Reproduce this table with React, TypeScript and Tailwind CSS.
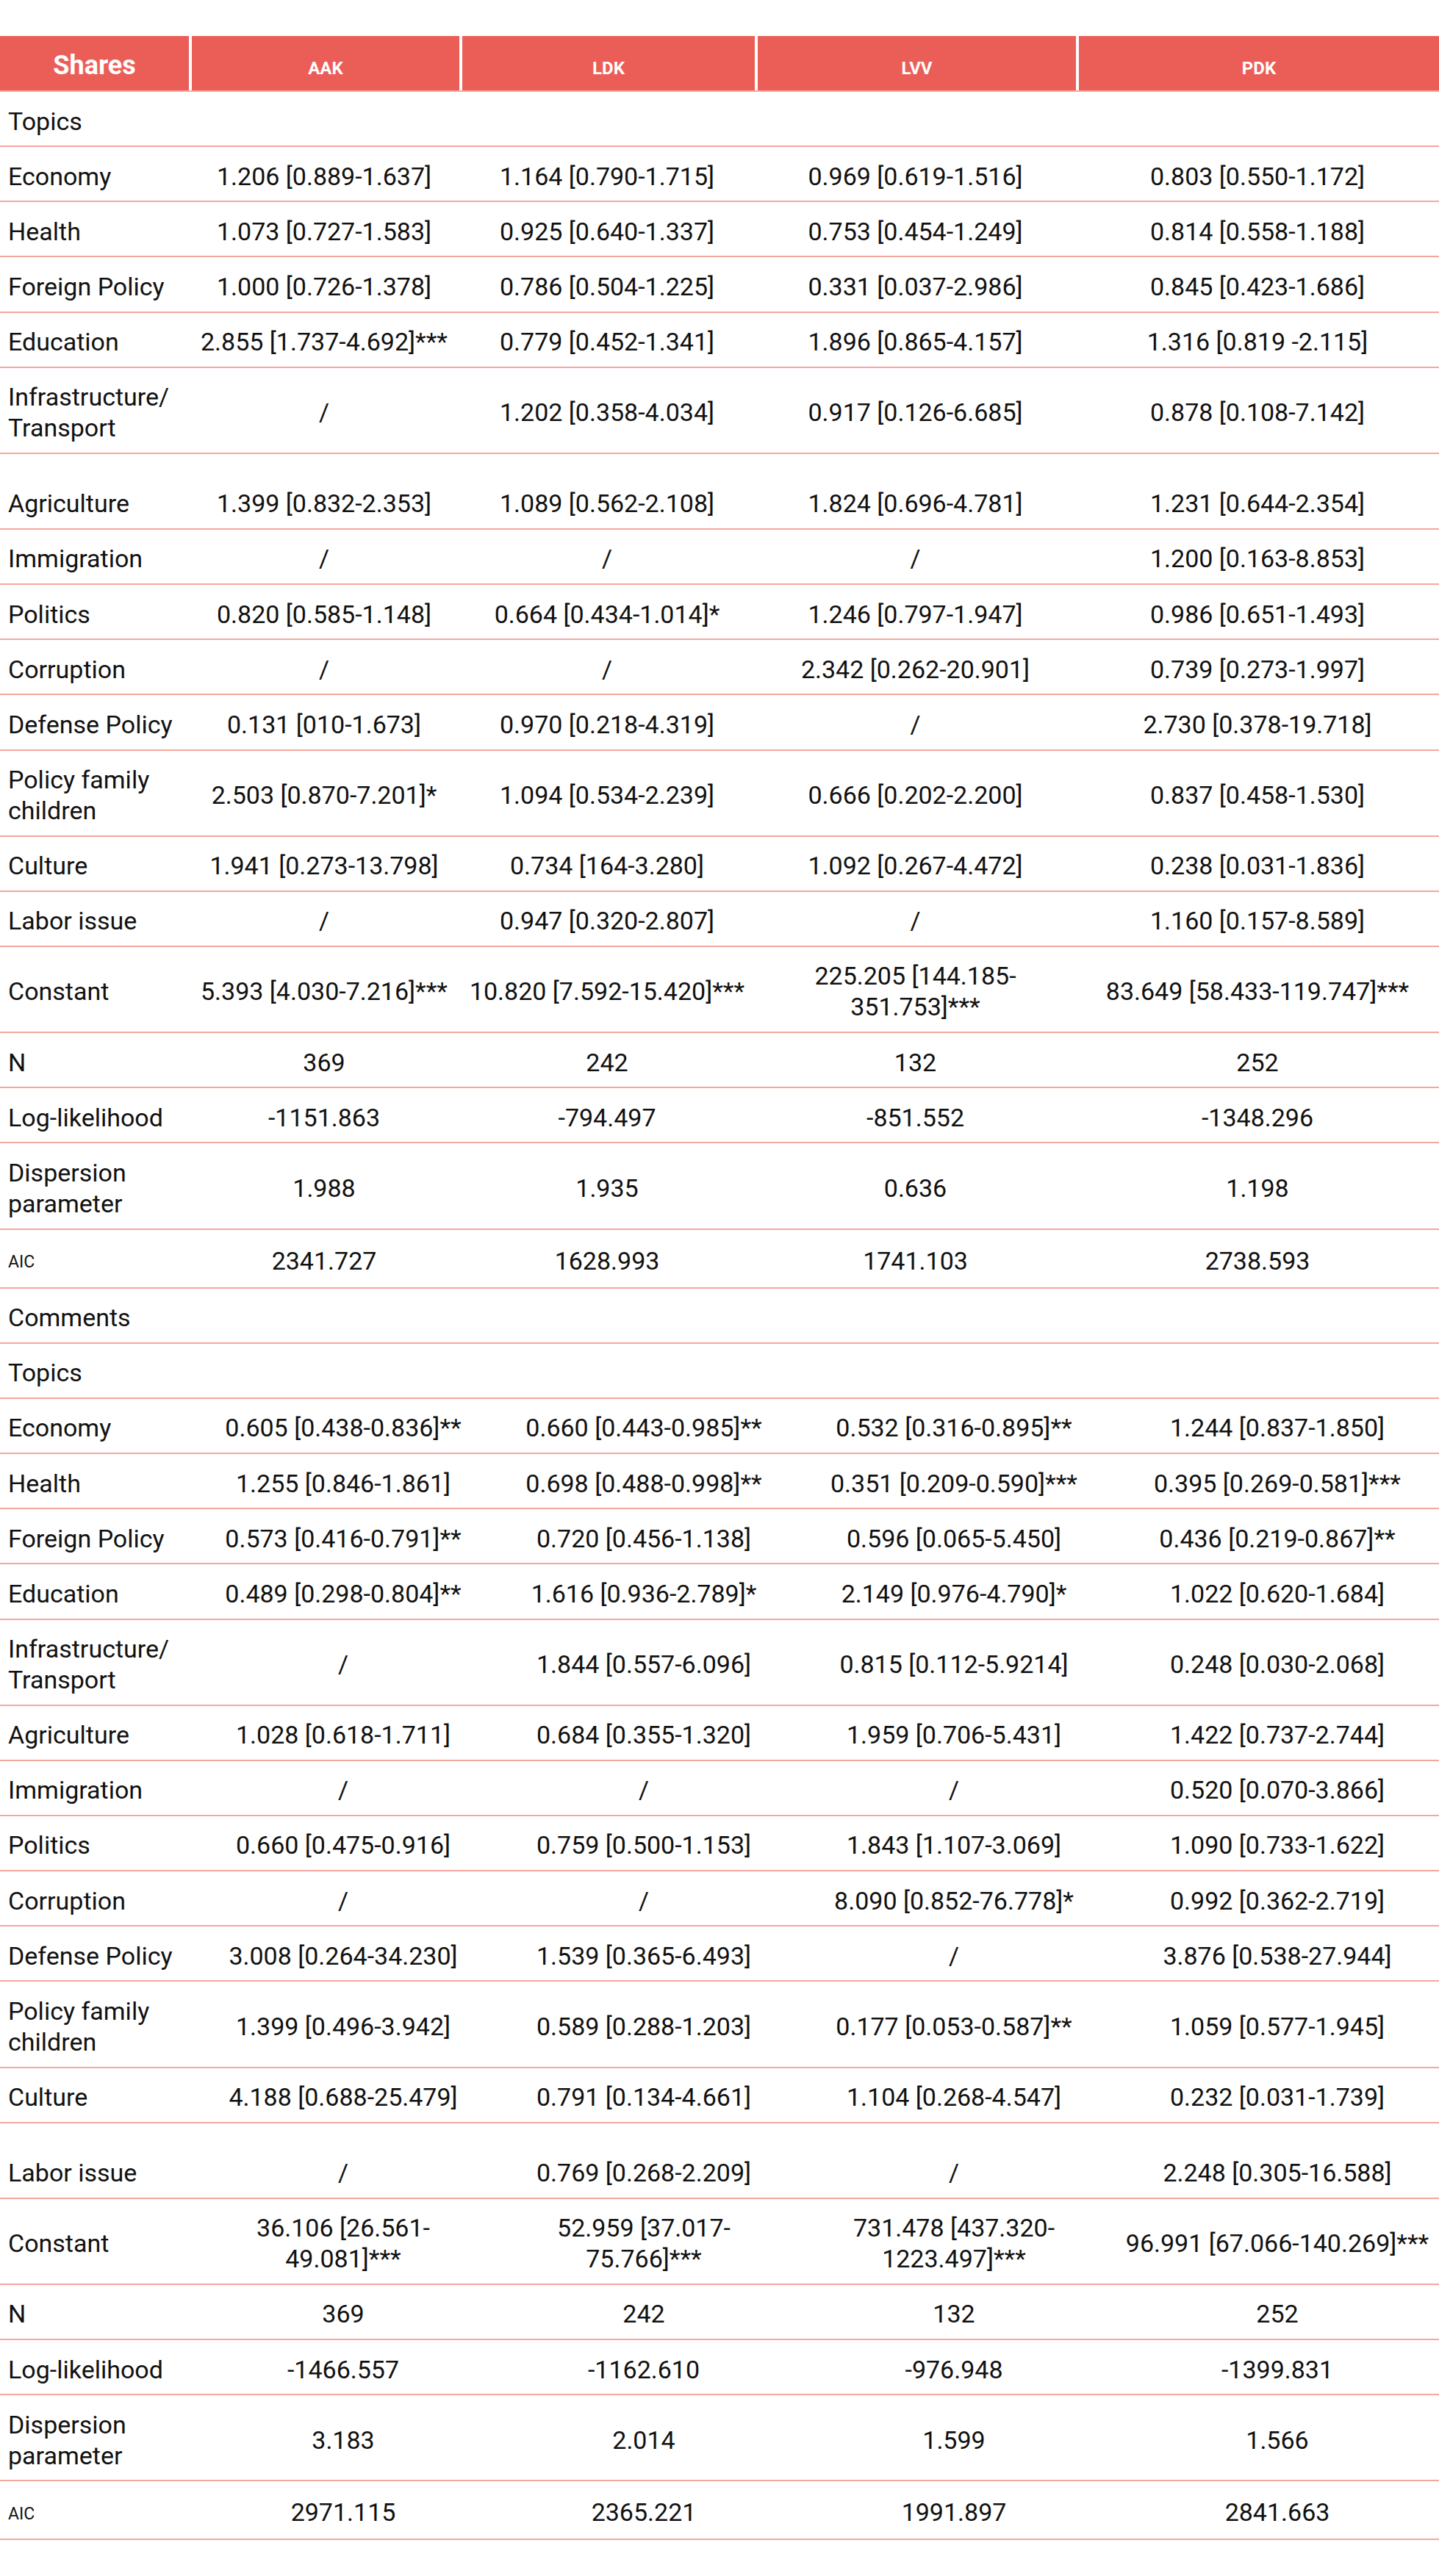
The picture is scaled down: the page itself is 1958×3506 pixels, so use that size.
type Cell = string | string[];

type Row = {
  label: Cell;
  values?: Cell[];
  extraTop?: boolean;
  small?: boolean;
};

const sharesRows: Row[] = [
  { label: "Topics" },
  { label: "Economy", values: ["1.206 [0.889-1.637]", "1.164 [0.790-1.715]", "0.969 [0.619-1.516]", "0.803 [0.550-1.172]"] },
  { label: "Health", values: ["1.073 [0.727-1.583]", "0.925 [0.640-1.337]", "0.753 [0.454-1.249]", "0.814 [0.558-1.188]"] },
  { label: "Foreign Policy", values: ["1.000 [0.726-1.378]", "0.786 [0.504-1.225]", "0.331 [0.037-2.986]", "0.845 [0.423-1.686]"] },
  { label: "Education", values: ["2.855 [1.737-4.692]***", "0.779 [0.452-1.341]", "1.896 [0.865-4.157]", "1.316 [0.819 -2.115]"] },
  { label: ["Infrastructure/", "Transport"], values: ["/", "1.202 [0.358-4.034]", "0.917 [0.126-6.685]", "0.878 [0.108-7.142]"] },
  { label: "Agriculture", extraTop: true, values: ["1.399 [0.832-2.353]", "1.089 [0.562-2.108]", "1.824 [0.696-4.781]", "1.231 [0.644-2.354]"] },
  { label: "Immigration", values: ["/", "/", "/", "1.200 [0.163-8.853]"] },
  { label: "Politics", values: ["0.820 [0.585-1.148]", "0.664 [0.434-1.014]*", "1.246 [0.797-1.947]", "0.986 [0.651-1.493]"] },
  { label: "Corruption", values: ["/", "/", "2.342 [0.262-20.901]", "0.739 [0.273-1.997]"] },
  { label: "Defense Policy", values: ["0.131 [010-1.673]", "0.970 [0.218-4.319]", "/", "2.730 [0.378-19.718]"] },
  { label: ["Policy family", "children"], values: ["2.503 [0.870-7.201]*", "1.094 [0.534-2.239]", "0.666 [0.202-2.200]", "0.837 [0.458-1.530]"] },
  { label: "Culture", values: ["1.941 [0.273-13.798]", "0.734 [164-3.280]", "1.092 [0.267-4.472]", "0.238 [0.031-1.836]"] },
  { label: "Labor issue", values: ["/", "0.947 [0.320-2.807]", "/", "1.160 [0.157-8.589]"] },
  {
    label: "Constant",
    values: ["5.393 [4.030-7.216]***", "10.820 [7.592-15.420]***", ["225.205 [144.185-", "351.753]***"], "83.649 [58.433-119.747]***"],
  },
  { label: "N", values: ["369", "242", "132", "252"] },
  { label: "Log-likelihood", values: ["-1151.863", "-794.497", "-851.552", "-1348.296"] },
  { label: ["Dispersion", "parameter"], values: ["1.988", "1.935", "0.636", "1.198"] },
  { label: "AIC", small: true, values: ["2341.727", "1628.993", "1741.103", "2738.593"] },
];

const commentRows: Row[] = [
  { label: "Comments" },
  { label: "Topics" },
  { label: "Economy", values: ["0.605 [0.438-0.836]**", "0.660 [0.443-0.985]**", "0.532 [0.316-0.895]**", "1.244 [0.837-1.850]"] },
  { label: "Health", values: ["1.255 [0.846-1.861]", "0.698 [0.488-0.998]**", "0.351 [0.209-0.590]***", "0.395 [0.269-0.581]***"] },
  { label: "Foreign Policy", values: ["0.573 [0.416-0.791]**", "0.720 [0.456-1.138]", "0.596 [0.065-5.450]", "0.436 [0.219-0.867]**"] },
  { label: "Education", values: ["0.489 [0.298-0.804]**", "1.616 [0.936-2.789]*", "2.149 [0.976-4.790]*", "1.022 [0.620-1.684]"] },
  { label: ["Infrastructure/", "Transport"], values: ["/", "1.844 [0.557-6.096]", "0.815 [0.112-5.9214]", "0.248 [0.030-2.068]"] },
  { label: "Agriculture", values: ["1.028 [0.618-1.711]", "0.684 [0.355-1.320]", "1.959 [0.706-5.431]", "1.422 [0.737-2.744]"] },
  { label: "Immigration", values: ["/", "/", "/", "0.520 [0.070-3.866]"] },
  { label: "Politics", values: ["0.660 [0.475-0.916]", "0.759 [0.500-1.153]", "1.843 [1.107-3.069]", "1.090 [0.733-1.622]"] },
  { label: "Corruption", values: ["/", "/", "8.090 [0.852-76.778]*", "0.992 [0.362-2.719]"] },
  { label: "Defense Policy", values: ["3.008 [0.264-34.230]", "1.539 [0.365-6.493]", "/", "3.876 [0.538-27.944]"] },
  { label: ["Policy family", "children"], values: ["1.399 [0.496-3.942]", "0.589 [0.288-1.203]", "0.177 [0.053-0.587]**", "1.059 [0.577-1.945]"] },
  { label: "Culture", values: ["4.188 [0.688-25.479]", "0.791 [0.134-4.661]", "1.104 [0.268-4.547]", "0.232 [0.031-1.739]"] },
  { label: "Labor issue", extraTop: true, values: ["/", "0.769 [0.268-2.209]", "/", "2.248 [0.305-16.588]"] },
  {
    label: "Constant",
    values: [
      ["36.106 [26.561-", "49.081]***"],
      ["52.959 [37.017-", "75.766]***"],
      ["731.478 [437.320-", "1223.497]***"],
      "96.991 [67.066-140.269]***",
    ],
  },
  { label: "N", values: ["369", "242", "132", "252"] },
  { label: "Log-likelihood", values: ["-1466.557", "-1162.610", "-976.948", "-1399.831"] },
  { label: ["Dispersion", "parameter"], values: ["3.183", "2.014", "1.599", "1.566"] },
  { label: "AIC", small: true, values: ["2971.115", "2365.221", "1991.897", "2841.663"] },
];

const headers = ["AAK", "LDK", "LVV", "PDK"];

function Lines({ text }: { text: Cell }) {
  const lines = Array.isArray(text) ? text : [text];
  return (
    <>
      {lines.map((line, i) => (
        <div key={i} className="whitespace-nowrap">
          {line}
        </div>
      ))}
    </>
  );
}

function TableRow({ row, cols }: { row: Row; cols: string }) {
  return (
    <div
      className={`grid ${cols} border-b-2 border-[#F6A69C] pb-[12.65px] ${
        row.extraTop ? "pt-[46.5px]" : "pt-[18.5px]"
      }`}
    >
      <div className="flex items-center pl-[11px]">
        <div>
          {row.small ? (
            <span className="text-[23px]">{row.label}</span>
          ) : (
            <Lines text={row.label} />
          )}
        </div>
      </div>
      {(row.values ?? ["", "", "", ""]).map((v, i) => (
        <div key={i} className="flex items-center justify-center text-center px-3">
          <div>
            <Lines text={v} />
          </div>
        </div>
      ))}
    </div>
  );
}

export default function App() {
  const sharesCols = "grid-cols-[257px_368px_402px_437px_494px]";
  const commentCols = "grid-cols-[260px_414px_404px_440px_440px]";

  return (
    <div
      className="w-full min-h-screen bg-white pt-[49px] text-[34px] leading-[42px] text-[#111111]"
      style={{ fontFamily: "Roboto, 'Liberation Sans', sans-serif" }}
    >
      {/* Header */}
      <div className={`grid ${sharesCols} border-b-2 border-[#F6A69C]`}>
        <div className="flex h-[74px] items-end justify-center bg-[#EB5E58] pb-[13px] text-[36px] font-bold text-white">
          Shares
        </div>
        {headers.map((h) => (
          <div
            key={h}
            className="flex h-[74px] items-end justify-center border-l-4 border-white bg-[#EB5E58] pb-[9px] text-[24px] font-bold text-white"
          >
            {h}
          </div>
        ))}
      </div>

      {/* Shares */}
      {sharesRows.map((row, i) => (
        <TableRow key={`s-${i}`} row={row} cols={sharesCols} />
      ))}

      {/* Comments */}
      {commentRows.map((row, i) => (
        <TableRow key={`c-${i}`} row={row} cols={commentCols} />
      ))}

      <div className="h-[50px]" />
    </div>
  );
}
